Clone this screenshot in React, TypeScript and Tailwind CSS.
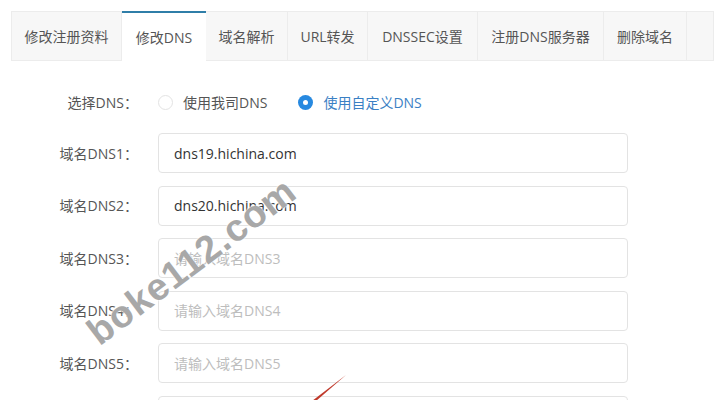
const tabs = ['修改注册资料', '修改DNS', '域名解析', 'URL转发', 'DNSSEC设置', '注册DNS服务器', '删除域名'];
const tabWidths = ['w-[111px]', 'w-[84px]', 'w-[82px]', 'w-[80px]', 'w-[110px]', 'w-[126px]', 'w-[83px]'];

const rows = [
  { label: '域名DNS1：', value: 'dns19.hichina.com' },
  { label: '域名DNS2：', value: 'dns20.hichina.com' },
  { label: '域名DNS3：', placeholder: '请输入域名DNS3' },
  { label: '域名DNS4：', placeholder: '请输入域名DNS4' },
  { label: '域名DNS5：', placeholder: '请输入域名DNS5' },
  { label: '', placeholder: '' },
];

export default function App() {
  return (
    <div
      className="relative w-[714px] h-[400px] overflow-hidden bg-white text-[14px] text-[#555]"
      style={{ fontFamily: '"Open Sans", "Noto Sans CJK SC", sans-serif' }}
    >
      {/* tabs */}
      <div className="flex pt-[11px] pl-[11px]">
        {tabs.map((t, i) =>
          i === 1 ? (
            <div
              key={t}
              className={`${tabWidths[i]} h-[50px] flex items-center justify-center bg-white border-t-2 border-[#2f7ea8] text-[#555]`}
            >
              {t}
            </div>
          ) : (
            <div
              key={t}
              className={`${tabWidths[i]} h-[50px] flex items-center justify-center bg-[#f7f7f7] border border-[#ececec] border-l-0 first:border-l`}
            >
              {t}
            </div>
          )
        )}
        <div className="flex-1 h-[50px] bg-[#f7f7f7] border border-l-0 border-[#ececec]" />
      </div>

      {/* form */}
      <div className="flex flex-col">
        <div className="flex items-center h-[22px] mt-[30px]">
          <div className="w-[139px] text-right pr-[1px]">选择DNS：</div>
          <label className="flex items-center ml-[19px]">
            <span className="w-[15px] h-[15px] rounded-full border border-[#e3e3e3] bg-white" />
            <span className="ml-[10px]">使用我司DNS</span>
          </label>
          <label className="flex items-center ml-[31px] text-[#3a80c4]">
            <span className="w-[15px] h-[15px] rounded-full bg-[#2789e0] flex items-center justify-center">
              <span className="w-[5px] h-[5px] rounded-full bg-white" />
            </span>
            <span className="ml-[10px]">使用自定义DNS</span>
          </label>
        </div>

        <div className="flex flex-col gap-[12.6px] mt-[20px]">
          {rows.map((r, i) => (
            <div key={i} className="flex items-center">
              <div className="w-[139px] text-right pr-[1px] whitespace-nowrap">{r.label}</div>
              <input
                readOnly
                defaultValue={r.value}
                placeholder={r.placeholder}
                className="ml-[19px] w-[470px] h-10 px-[15px] rounded-[4px] border border-[#e3e3e3] text-[#333] placeholder:text-[#bdbdbd] outline-none"
              />
            </div>
          ))}
        </div>
      </div>

      {/* watermark */}
      <div
        className="absolute left-[92px] top-[308px] -rotate-[37deg] origin-left text-[38px] font-bold text-[#a8a8a8] tracking-[1px] pointer-events-none"
        style={{ fontFamily: '"Liberation Sans", sans-serif', textShadow: '0 0 2px #fff, 0 0 2px #fff' }}
      >
        boke112.com
      </div>

      {/* red arrow line */}
      <svg className="absolute left-0 top-0 pointer-events-none" width="714" height="400">
        <path d="M346 375 L312 401 L316 401 Z" fill="#c0392b" />
      </svg>
    </div>
  );
}
